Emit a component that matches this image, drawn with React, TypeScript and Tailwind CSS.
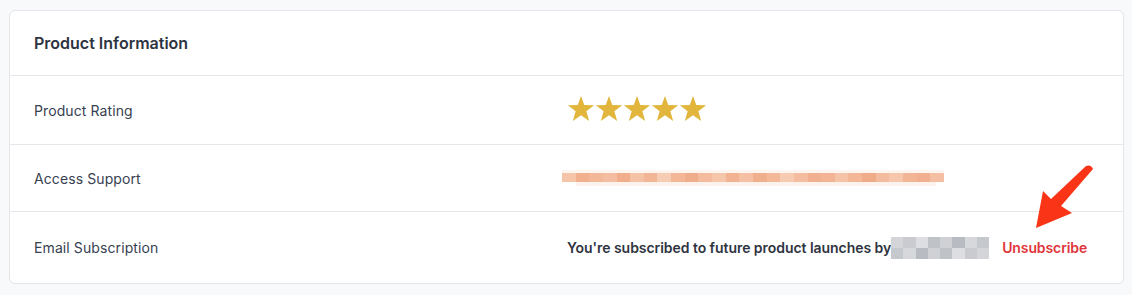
const orange = [
  "#f6c4a8", "#f1b08e", "#f3b898", "#f4bca0", "#f0ae8c", "#f5c2a6", "#f2b596", "#f7ccb4",
  "#f3b797", "#f0ad8b", "#f4bb9e", "#f6c6ab", "#f2b393", "#f5c0a3", "#f0af8d", "#f3b999",
  "#f7cbb2", "#f4bda0", "#f1b190", "#f2b494", "#f5c3a7", "#f3b696", "#f0ab88", "#f4bc9f",
  "#f6c7ad", "#f2b595", "#f1b08f", "#f4bfa2",
];

const grays = ["#d3d5d9", "#c9cbd0", "#dcdee1", "#bfc2c7", "#cfd1d5", "#b8bbc1", "#d6d8dc", "#c5c8cd"];

const Star = () => (
  <svg width="28" height="28" viewBox="0 0 24 24">
    <polygon
      points="12,0.8 14.8,8.6 23.3,8.8 16.6,14 19,22.2 12,17.4 5,22.2 7.4,14 0.7,8.8 9.2,8.6"
      fill="#e2b63c"
    />
  </svg>
);

const Row = ({ label, children, h }: { label: string; children: React.ReactNode; h: string }) => (
  <div className={`flex items-center border-t border-[#e5e7eb] pl-6 ${h}`}>
    <div className="w-[533px] shrink-0 text-[14px] tracking-[0.1px] text-[#374151]">{label}</div>
    <div className="flex flex-1 items-center">{children}</div>
  </div>
);

export default function App() {
  return (
    <div
      className="relative min-h-[295px] w-[1132px] bg-[#f8f9fb] pb-[11px] pl-[9px] pr-[8px] pt-[10px]"
      style={{ fontFamily: "Inter, 'Noto Sans', sans-serif" }}
    >
      <div className="overflow-hidden rounded-md border border-[#e3e5e8] bg-white">
        <div className="flex h-[64px] items-center pl-6 text-[16px] font-semibold text-[#2d3340]">
          Product Information
        </div>
        <Row label="Product Rating" h="h-[69px]">
          <div className="-mt-[2px] flex">
            {[0, 1, 2, 3, 4].map((i) => (
              <Star key={i} />
            ))}
          </div>
        </Row>
        <Row label="Access Support" h="h-[67px]">
          <div className="-ml-[5px] flex flex-col">
            <div className="flex h-[3px] w-[382px] bg-[#fdf1ea] opacity-70" />
            <div className="flex h-[9px] w-[382px]">
              {orange.map((c, i) => (
                <div key={i} className="h-full flex-1" style={{ background: c }} />
              ))}
            </div>
            <div className="ml-[14px] h-[4px] w-[360px] bg-[#fdf3ee]" />
          </div>
        </Row>
        <Row label="Email Subscription" h="h-[72px]">
          <span className="text-[14px] font-semibold tracking-[-0.05px] text-[#2f3441]">
            You're subscribed to future product launches by
          </span>
          <div className="flex h-[22px] w-[98px] flex-wrap">
            {grays.concat(grays.slice().reverse()).map((c, i) => (
              <div key={i} className="h-[11px] w-[12.25px]" style={{ background: c }} />
            ))}
          </div>
          <span className="ml-[13px] text-[14px] font-semibold tracking-[-0.1px] text-[#e0353b]">Unsubscribe</span>
        </Row>
      </div>
      <svg className="absolute left-[1028px] top-[160px]" width="80" height="75" viewBox="1028 160 80 75">
        <path
          d="M1036 228 L1043 191 L1051 199 L1086 166 Q1091 164 1093 169 L1061 206 L1072 213 Z"
          fill="#fa3416"
        />
      </svg>
    </div>
  );
}
